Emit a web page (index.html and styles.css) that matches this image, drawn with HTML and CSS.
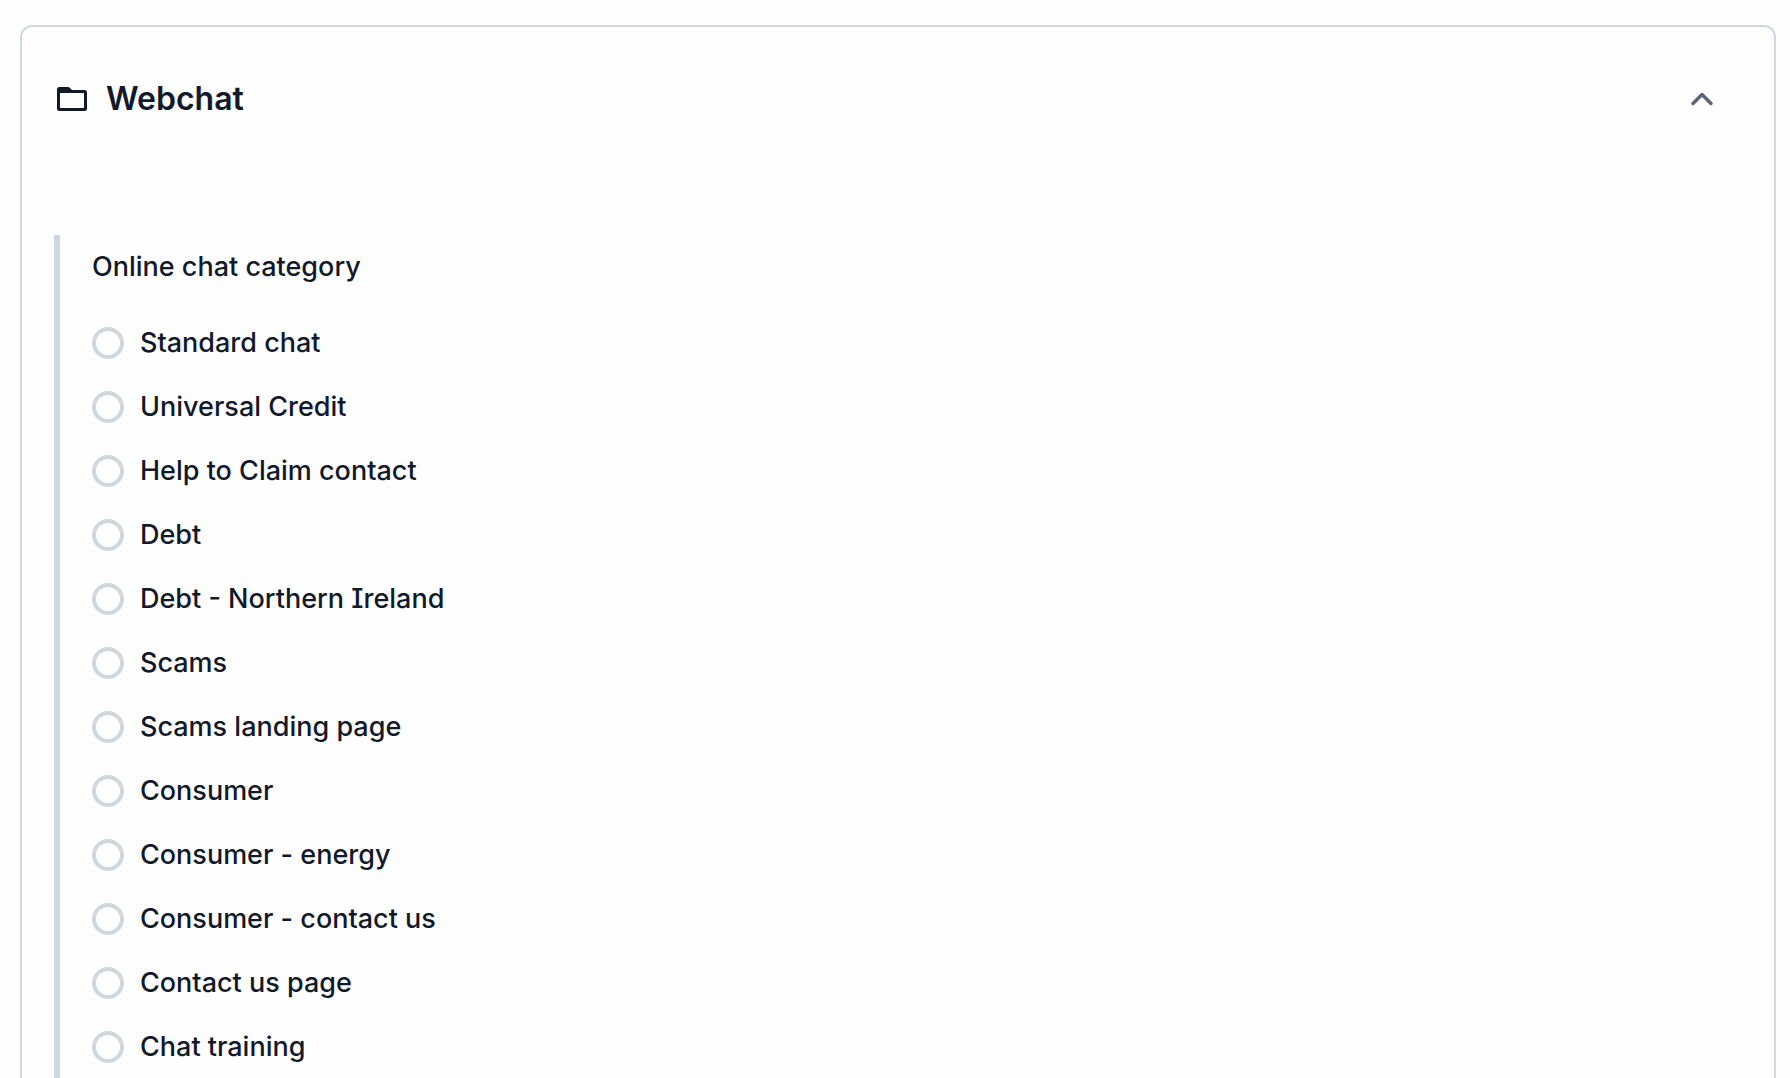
FILE: index.html
```html
<!DOCTYPE html>
<html lang="en">
<head>
<meta charset="utf-8">
<meta name="viewport" content="width=device-width, initial-scale=1">
<title>Webchat</title>
<link rel="stylesheet" href="styles.css">
</head>
<body>
<section class="panel">
  <h2 class="panel-heading">
    <button class="panel-toggle" type="button" aria-expanded="true" aria-controls="webchat-fields">
      <svg class="folder-icon" viewBox="0 0 36 36" aria-hidden="true">
        <path fill="currentColor" fill-rule="evenodd" d="M5.500 6H14q1.200 0 2 .9L18 9h12.500q2.500 0 2.500 2.500v16q0 2.500-2.500 2.500h-25Q3 30 3 27.500v-19Q3 6 5.500 6ZM6 12v15h24V12Z"/>
      </svg>
      <span class="panel-title">Webchat</span>
      <svg class="chevron-icon" viewBox="0 0 24 24" aria-hidden="true">
        <path d="M3 16.500 12 7.500l9 9" fill="none" stroke="currentColor" stroke-width="3.500" stroke-linecap="round" stroke-linejoin="round"/>
      </svg>
    </button>
  </h2>
  <fieldset class="group" id="webchat-fields">
    <legend class="group-title">Online chat category</legend>
    <div class="options">
      <label class="option"><input class="radio" type="radio" name="category" value="standard"><span>Standard chat</span></label>
      <label class="option"><input class="radio" type="radio" name="category" value="universal-credit"><span>Universal Credit</span></label>
      <label class="option"><input class="radio" type="radio" name="category" value="help-to-claim"><span>Help to Claim contact</span></label>
      <label class="option"><input class="radio" type="radio" name="category" value="debt"><span>Debt</span></label>
      <label class="option"><input class="radio" type="radio" name="category" value="debt-ni"><span>Debt - Northern Ireland</span></label>
      <label class="option"><input class="radio" type="radio" name="category" value="scams"><span>Scams</span></label>
      <label class="option"><input class="radio" type="radio" name="category" value="scams-landing"><span>Scams landing page</span></label>
      <label class="option"><input class="radio" type="radio" name="category" value="consumer"><span>Consumer</span></label>
      <label class="option"><input class="radio" type="radio" name="category" value="consumer-energy"><span>Consumer - energy</span></label>
      <label class="option"><input class="radio" type="radio" name="category" value="consumer-contact"><span>Consumer - contact us</span></label>
      <label class="option"><input class="radio" type="radio" name="category" value="contact-page"><span>Contact us page</span></label>
      <label class="option"><input class="radio" type="radio" name="category" value="training"><span>Chat training</span></label>
    </div>
  </fieldset>
</section>
</body>
</html>
```
FILE: styles.css
```css
* {
  box-sizing: border-box;
}

body {
  display: flex;
  flex-direction: column;
  min-height: 100vh;
  margin: 0;
  padding: 25px 14px 0 20px;
  background: #fefefe;
  color: #111a2b;
  font-family: Inter, "Liberation Sans", sans-serif;
  font-size: 27px;
  font-weight: 500;
  line-height: 32px;
  font-feature-settings: "cv08";
}

.panel {
  display: flex;
  flex: 1;
  flex-direction: column;
  border: 2px solid #d0d8df;
  border-bottom: 0;
  border-radius: 12px 12px 0 0;
  padding: 0 32px;
}

.panel-heading {
  margin: 0 0 64px;
}

.panel-toggle {
  display: flex;
  align-items: center;
  gap: 16px;
  width: 100%;
  height: 144px;
  border: 0;
  padding: 0 28px 0 0;
  background: none;
  color: inherit;
  font: inherit;
  font-size: 32px;
  font-weight: 600;
  text-align: left;
  cursor: pointer;
}

.folder-icon {
  width: 36px;
  height: 36px;
}

.panel-title {
  flex: 1;
}

.chevron-icon {
  width: 24px;
  height: 24px;
  color: #5a6478;
}

.group {
  flex: 1;
  min-width: 0;
  margin: 0;
  border: 0;
  border-left: 6px solid #d0d8df;
  padding: 16px 0 0 32px;
}

.group-title {
  float: left;
  width: 100%;
  margin-bottom: 44px;
  padding: 0;
}

.options {
  display: flex;
  flex-direction: column;
  clear: both;
  gap: 32px;
}

.option {
  display: flex;
  align-items: center;
  gap: 16px;
  cursor: pointer;
}

.radio {
  appearance: none;
  width: 32px;
  height: 32px;
  margin: 0;
  border: 4px solid #d0d8df;
  border-radius: 50%;
  background: #fefefe;
}

.radio:checked {
  border-color: #111a2b;
}
```
